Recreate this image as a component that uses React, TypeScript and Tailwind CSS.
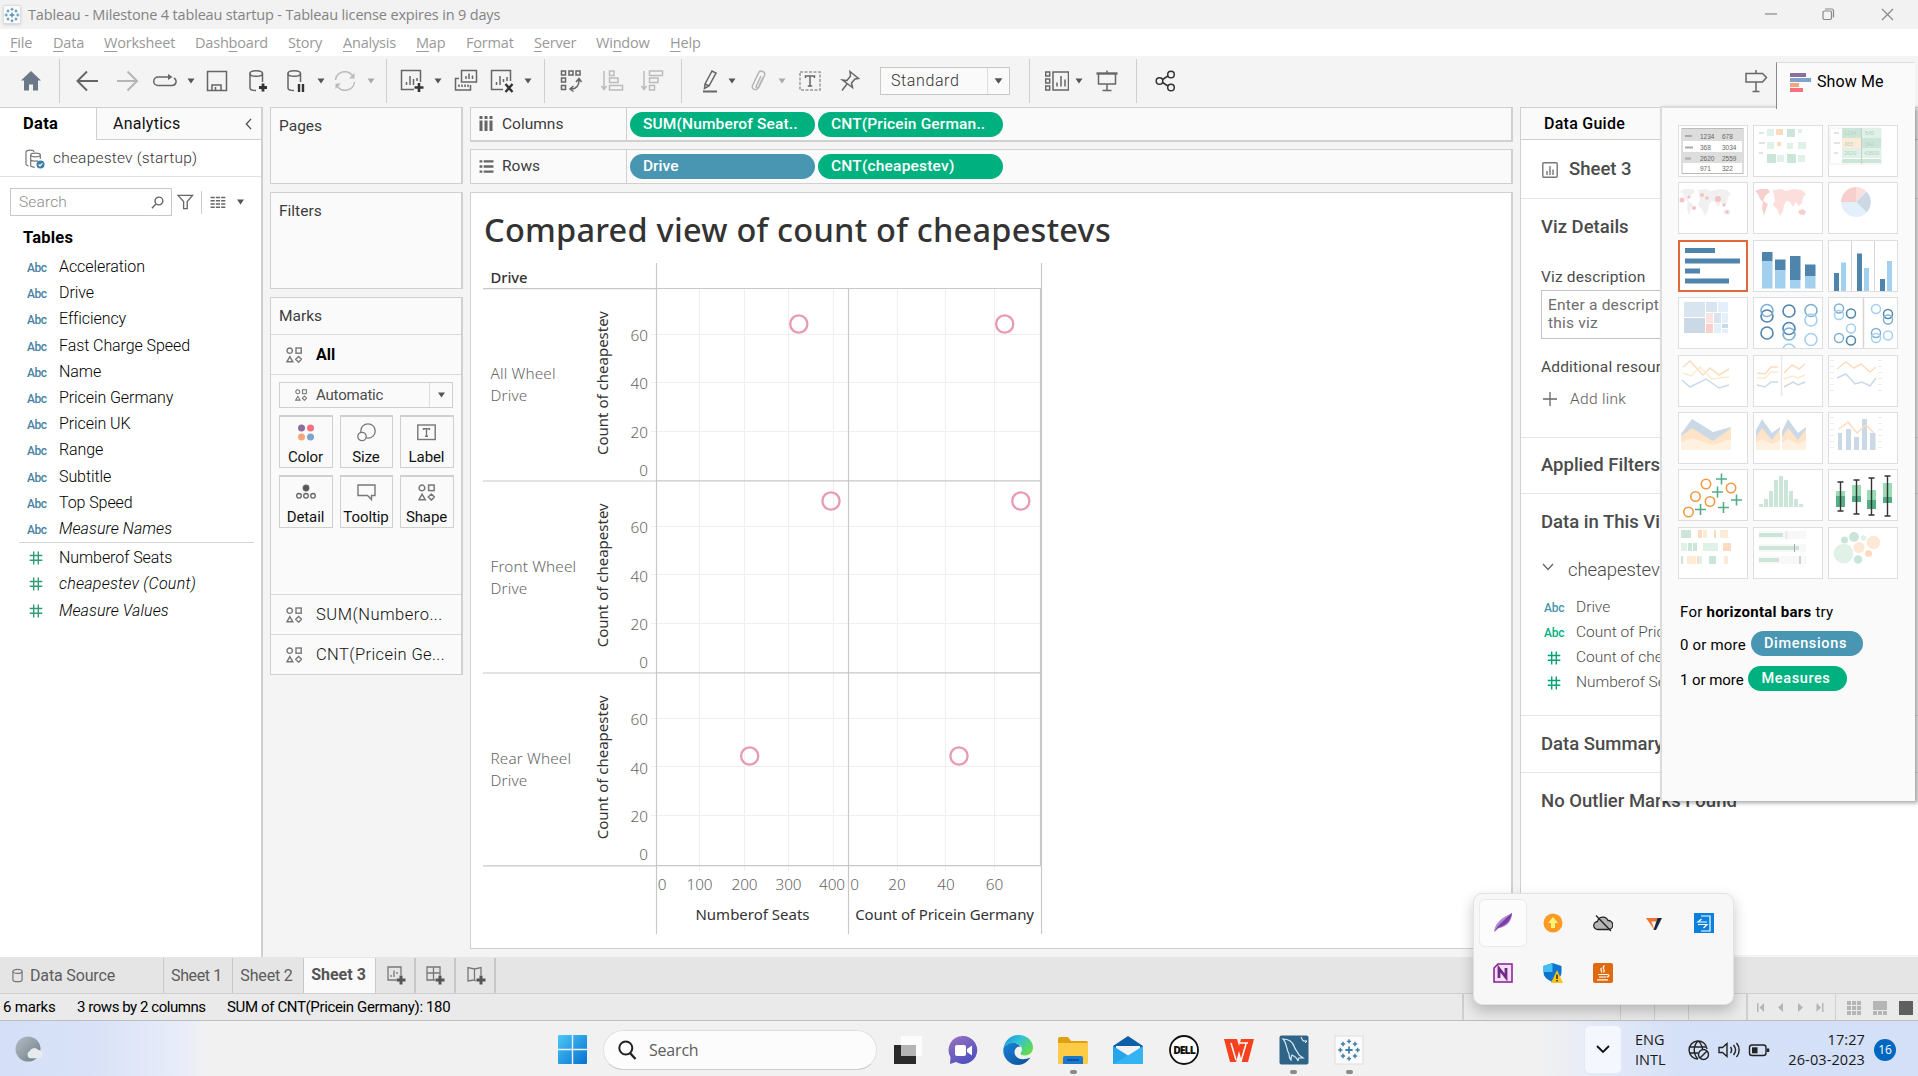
import React from "react";

type P = { children?: React.ReactNode; className?: string };

/* ---------- shared bits ---------- */

function Ic({ children, className = "" }: P) {
  return (
    <svg viewBox="0 0 24 24" className={`h-6 w-6 shrink-0 ${className}`} fill="none" stroke="#666" strokeWidth="1.5">
      {children}
    </svg>
  );
}

function Tri({ className = "" }: P) {
  return (
    <svg viewBox="0 0 8 6" className={`h-1.5 w-2 shrink-0 text-[#555] ${className}`} fill="currentColor">
      <path d="M0.5 0.5h7L4 5.5z" />
    </svg>
  );
}

const Sep = ({ className = "" }: P) => <div className={`h-[44px] w-px shrink-0 bg-[#cfcfcf] ${className}`} />;

const Shapes = ({ className = "" }: P) => (
  <svg viewBox="0 0 16 16" className={`shrink-0 ${className}`} fill="none" stroke="#777" strokeWidth="1.4">
    <circle cx="3.7" cy="3.7" r="2.7" />
    <rect x="10" y="1" width="5.2" height="5.2" />
    <path d="M3.8 9.6l3 5.2H0.9zM12.6 9.4l2.9 2.9-2.9 2.9-2.9-2.9z" />
  </svg>
);

const Hash = ({ className = "" }: P) => (
  <svg viewBox="0 0 14 14" className={`h-3.5 w-3.5 shrink-0 ${className}`} fill="none" stroke="currentColor" strokeWidth="1.4">
    <path d="M4.7 0.5v13M9.3 0.5v13M0.7 4.5h12.6M0.7 9.2h12.6" />
  </svg>
);

/* ---------- title and menu ---------- */

function TableauMark({ className = "" }: P) {
  return (
    <svg viewBox="0 0 20 20" className={className} stroke="#4b8fb5" fill="none" strokeWidth="1.3">
      <path d="M10 7v6M7 10h6" strokeWidth="1.6" />
      <path d="M10 1v3.6M8.2 2.8h3.6M10 15.4V19M8.2 17.2h3.6M2.8 8.2v3.6M1 10h3.6M17.2 8.2v3.6M15.4 10H19" />
      <path d="M5 3.2v3.6M3.2 5h3.6M15 3.2v3.6M13.2 5h3.6M5 13.2v3.6M3.2 15h3.6M15 13.2v3.6M13.2 15h3.6" />
    </svg>
  );
}

function TitleBar() {
  return (
    <div className="flex h-[29px] shrink-0 items-center bg-[#f2f2f2] pl-[3px] font-['Open_Sans',sans-serif] text-[14.5px] tracking-[-0.16px] text-[#838383]">
      <div className="flex h-[19px] w-[18px] items-center justify-center border border-[#ddd] bg-[#fafafa] shadow">
        <TableauMark className="h-[16px] w-[16px]" />
      </div>
      <span className="ml-[7px] whitespace-nowrap">Tableau - Milestone 4 tableau startup - Tableau license expires in 9 days</span>
      <svg viewBox="0 0 140 16" className="mr-[21px] ml-auto h-4 w-[140px]" fill="none" stroke="#888" strokeWidth="1.2">
        <path d="M8 7h12" />
        <rect x="66" y="4" width="8.5" height="8.5" rx="1.5" />
        <path d="M68 2h6.500a2 2 0 0 1 2 2V10.500" />
        <path d="M125 2l11 11M136 2l-11 11" />
      </svg>
    </div>
  );
}

const menus: [string, string, string, string][] = [
  ["", "F", "ile", "w-[43px]"],
  ["", "D", "ata", "w-[51px]"],
  ["", "W", "orksheet", "w-[91px]"],
  ["Dash", "b", "oard", "w-[93px]"],
  ["S", "t", "ory", "w-[55px]"],
  ["", "A", "nalysis", "w-[73px]"],
  ["", "M", "ap", "w-[50px]"],
  ["F", "o", "rmat", "w-[68px]"],
  ["", "S", "erver", "w-[62px]"],
  ["Wi", "n", "dow", "w-[74px]"],
  ["", "H", "elp", "w-[40px]"],
];

function MenuBar() {
  return (
    <div className="flex h-[27px] shrink-0 items-center bg-white pl-[10px] font-['Open_Sans',sans-serif] text-[14.5px] tracking-[-0.2px] text-[#999]">
      {menus.map(([a, b, c, w]) => (
        <span key={a + b + c} className={`${w} whitespace-nowrap`}>
          {a}
          <span className="underline underline-offset-[3px]">{b}</span>
          {c}
        </span>
      ))}
    </div>
  );
}

/* ---------- toolbar ---------- */

function Toolbar() {
  return (
    <div className="flex h-[51px] shrink-0 items-center bg-[#f4f4f4] pb-px pl-[19px]">
      <Ic>
        <path d="M12 2L2 11.500h3V21.500h5v-6h4v6h5v-10h3z" fill="#6b7888" stroke="none" />
      </Ic>
      <Sep className="ml-4" />
      <Ic className="ml-[15px]">
        <path d="M23 12H3M12 2.500L2.500 12l9.500 9.500" strokeWidth="2" />
      </Ic>
      <Ic className="ml-4">
        <path d="M2 12h20M12.500 2.500l9.500 9.500-9.500 9.500" strokeWidth="2" stroke="#b5b5b5" />
      </Ic>
      <Ic className="ml-[14px]">
        <path d="M16 8H5a4 4 0 0 0 0 8.500h14a4 4 0 0 0 2-7.500" />
        <path d="M15 5l4.500 3-4.500 3z" fill="#666" stroke="none" />
      </Ic>
      <Tri className="ml-[10px]" />
      <Ic className="ml-[10px]">
        <path d="M2.500 2.500h19v19h-19zM7 21v-5h9v5M10.500 21v-3" />
      </Ic>
      <Ic className="ml-4">
        <path d="M5 4.500v14.500c0 1.500 2.500 2.500 6 2.500M17.500 4.500V13" />
        <ellipse cx="11.200" cy="4.500" rx="6.300" ry="2.800" />
        <path d="M18 14.500v8M14 18.500h8" stroke="#333" strokeWidth="2.800" />
      </Ic>
      <Ic className="ml-[14px]">
        <path d="M5 4.500v14.500c0 1.500 2.500 2.500 6 2.500M17.500 4.500V13" />
        <ellipse cx="11.200" cy="4.500" rx="6.300" ry="2.800" />
        <path d="M16 15v8M20 15v8" stroke="#333" strokeWidth="2.400" />
      </Ic>
      <Tri className="ml-[10px]" />
      <Ic className="ml-2">
        <path d="M2.500 11a9.500 9.500 0 0 1 17-4.500M21.500 13a9.500 9.500 0 0 1-17 4.500" stroke="#bbb" />
        <path d="M21.500 4v5.500h-5.500zM2.500 20v-5.500h5.500z" fill="#bbb" stroke="none" />
      </Ic>
      <Tri className="ml-[10px] !text-[#aaa]" />
      <Sep className="ml-[11px]" />
      <Ic className="ml-[13px]">
        <path d="M14 20.500H1.500V1.500h19V13M6.500 16v-3M10 16V7M13.500 16v-6M17 12V9" />
        <path d="M19 14v9M14.500 18.500h9" stroke="#333" strokeWidth="2.600" />
      </Ic>
      <Tri className="ml-[10px]" />
      <Ic className="ml-[12px]">
        <path d="M7.500 1.500h15v11.500h-15zM12 10V7M15 10V4.500M18.500 10V6.500M5 9.500H1.500V21h15v-5M5 18v-2.500M8 18v-2.500M11 18v-2.500M14 18v-2.500" />
      </Ic>
      <Ic className="ml-[12px]">
        <path d="M13 20.500H1.500V1.500h19V12M6.500 16v-3M10 16V7M13.500 13v-3M17 12V8" />
        <path d="M15.500 15l7 8M22.500 15l-7 8" stroke="#333" strokeWidth="2.400" />
      </Ic>
      <Tri className="ml-[10px]" />
      <Sep className="ml-[12px]" />
      <Ic className="ml-[14px]">
        <path d="M2.500 2h4v4h-4zM10 2h4v4h-4zM17 2h4v4h-4zM2.500 9h4v4h-4zM2.500 16.500h4v4h-4zM12 20c6 0 8-4 8-9M17 13l3-3.500 2.500 3.500M14.500 17L11 20l3.500 2.500" />
      </Ic>
      <Ic className="ml-[17px]">
        <path d="M4 2v18M1.500 17L4 20.500 6.500 17M9.500 2h4.500v4.500H9.500zM9.500 9h8.500v4.500H9.500zM9.500 16.500h13V21h-13z" stroke="#bbb" />
      </Ic>
      <Ic className="ml-4">
        <path d="M4 2v18M1.500 17L4 20.500 6.500 17M9.500 2h13v4.500h-13zM9.500 9h8.500v4.500H9.500zM9.500 16.500h5V21h-5z" stroke="#bbb" />
      </Ic>
      <Sep className="ml-[17px]" />
      <Ic className="ml-[17px]">
        <path d="M6 15l7-13 4 2-7 13-4.500 2.500zM6 15l4 2" />
        <path d="M4 22.500h14" strokeWidth="2" />
      </Ic>
      <Tri className="ml-[5px]" />
      <Ic className="ml-[11px]">
        <path d="M16 8.500L11 19c-1.500 3-7 1.500-5.500-2.500L11.500 4c1.500-3.500 7.500-1.500 6 2.500L12 18c-1 2-3.500 1-2.700-1L14 7" stroke="#b5b5b5" />
      </Ic>
      <Tri className="ml-[7px] !text-[#aaa]" />
      <Ic className="ml-[12px]">
        <rect x="2" y="3" width="20" height="18" strokeDasharray="3 1.500" stroke="#999" />
        <path d="M7.500 9V7h9v2M12 7v10M9.800 17h4.400" />
      </Ic>
      <Ic className="ml-4">
        <path d="M12 2.500l8.500 7-3.500.5-3.500 4 1 4.500L4.500 11l4.500.5 3.500-4.500zM9 15l-5 6.500" />
      </Ic>
      <div className="ml-[18px] flex h-7 w-[130px] items-center border border-[#c8c8c8] bg-[#fafafa]">
        <span className="w-[106px] pl-[10px] font-[Roboto,sans-serif] text-[16px] font-[350] tracking-[0.600px] text-[#333]">Standard</span>
        <div className="flex h-full flex-1 items-center justify-center border-l border-[#ddd]">
          <Tri className="!h-2 !w-[9px]" />
        </div>
      </div>
      <Sep className="ml-[19px]" />
      <Ic className="ml-[15px]">
        <path d="M0.700 3h4v4h-4zM0.700 10h4v4h-4zM0.700 17h4v4h-4zM8 3h15.500v18H8zM12 17.500v-4M16 17.500V7M20 17.500v-7" />
      </Ic>
      <Tri className="ml-[6px]" />
      <Ic className="ml-[12px]">
        <path d="M1.500 4.500h21" strokeWidth="2.400" />
        <path d="M12 1.500v3M3.500 4.500V15h17V4.500M12 15v6M7.500 21.500h9" />
      </Ic>
      <Sep className="ml-[17px]" />
      <Ic className="ml-[17px]">
        <g stroke="#333">
          <circle cx="5.500" cy="12" r="3.300" />
          <circle cx="17" cy="5.500" r="3.300" />
          <circle cx="17" cy="18.500" r="3.300" />
          <path d="M8.500 10.500l5.500-3.500M8.500 13.500l5.500 3.500" />
        </g>
      </Ic>
      <Ic className="mr-[150px] ml-auto">
        <path d="M12 1v4M2 4.500h16.500l4 4-4 4.500H2zM12 13v9.500M8.500 22.500h7" />
      </Ic>
    </div>
  );
}

/* ---------- data pane ---------- */

const dims = ["Acceleration", "Drive", "Efficiency", "Fast Charge Speed", "Name", "Pricein Germany", "Pricein UK", "Range", "Subtitle", "Top Speed", "Measure Names"];
const measures = ["Numberof Seats", "cheapestev (Count)", "Measure Values"];

function DataPane() {
  return (
    <div className="flex w-[263px] shrink-0 flex-col border-r-2 border-[#d0d0d0] bg-white">
      <div className="flex h-[33px] border-t border-[#d0d0d0] text-[16px] text-black">
        <div className="w-[97px] border-r border-[#d0d0d0] pl-[23px] text-[16.500px] leading-[32px] font-bold tracking-[0.300px]">Data</div>
        <div className="flex flex-1 items-center justify-between border-b border-[#d0d0d0] bg-[#fafafa] pr-[9px] pl-[16px] font-[380] tracking-[0.250px] text-[#111]">
          Analytics
          <svg viewBox="0 0 8 14" className="h-3 w-[7px]" fill="none" stroke="#555" strokeWidth="1.6">
            <path d="M7 1L1.500 7 7 13" />
          </svg>
        </div>
      </div>
      <div className="flex h-[37px] items-center border-b border-[#e0e0e0] pt-px pl-[25px] text-[15.500px] font-[350] tracking-[0.200px] text-[#333]">
        <svg viewBox="0 0 20 20" className="h-5 w-5" fill="none" stroke="#777" strokeWidth="1.200">
          <path d="M1 3v12c0 1 1 1.500 2.500 1.800M1 3c0-2.500 8-2.500 8 0" />
          <ellipse cx="10.500" cy="6" rx="4.800" ry="1.800" />
          <path d="M5.700 6v11c1 1 2 1.300 4 1.300M15.300 6v4M5.700 11c2 1.500 6 1.500 7 .5" />
          <circle cx="15.500" cy="15.500" r="4" fill="#3b82a6" stroke="none" />
          <path d="M13.600 15.500l1.400 1.400 2.400-2.600" stroke="#fff" />
        </svg>
        <span className="ml-[8px]">cheapestev (startup)</span>
      </div>
      <div className="mt-[11px] flex h-7 items-center pl-[10px]">
        <div className="flex h-7 w-[162px] items-center justify-between border border-[#c8c8c8] pt-px pr-[7px] pl-[8px] text-[15.500px] font-[350] tracking-[0.150px] text-[#8c8c8c]">
          Search
          <svg viewBox="0 0 12 12" className="h-[13px] w-[13px]" fill="none" stroke="#666" strokeWidth="1.300">
            <circle cx="7.300" cy="4.600" r="3.600" />
            <path d="M4.600 7.400L0.800 11.200" />
          </svg>
        </div>
        <svg viewBox="0 0 18 18" className="ml-[5px] h-[18px] w-[17px]" fill="none" stroke="#666" strokeWidth="1.400">
          <path d="M1 2h15.500l-5.700 6.500V16H7V8.500z" />
        </svg>
        <div className="ml-[7px] h-[23px] w-px bg-[#ccc]" />
        <svg viewBox="0 0 16 14" className="ml-[8px] h-[13px] w-4" stroke="#666" strokeWidth="1.600" strokeDasharray="4.500 1.200">
          <path d="M0 1.500h16M0 5h16M0 8.500h16M0 12h16" />
        </svg>
        <Tri className="ml-[10px] !h-[6px] !w-[9px]" />
      </div>
      <div className="mt-[9px] h-[26px] pl-[23px] text-[16.500px] leading-[26px] font-bold tracking-[0.200px] text-black">Tables</div>
      <div className="mt-[3px] text-[16px] font-[350] text-black">
        {dims.map((d) => (
          <div key={d} className="flex h-[26.200px] items-center pl-[27px]">
            <span className="w-[32px] pt-[2px] text-[12px] font-medium tracking-[-0.5px] text-[#4683a5]">Abc</span>
            <span className={d === "Measure Names" ? "tracking-[0.080px] italic" : "tracking-[-0.080px]"}>{d}</span>
          </div>
        ))}
      </div>
      <div className="mr-[7px] ml-[19px] h-px bg-[#d4d4d4]" />
      <div className="mt-[2px] text-[16px] font-[350] text-black">
        {measures.map((m, i) => (
          <div key={m} className="flex h-[26.200px] items-center pl-[29px]">
            <Hash className="mr-4 text-[#2f9e74]" />
            <span className={i === 0 ? "tracking-[-0.080px]" : i === 1 ? "tracking-[0.250px] italic" : "tracking-[0.080px] italic"}>{m}</span>
          </div>
        ))}
      </div>
    </div>
  );
}

/* ---------- marks column ---------- */

const box = "border border-r-2 border-[#d0d0d0] bg-[#fafafa]";

function MarkButton({ label, children }: { label: string; children: React.ReactNode }) {
  return (
    <div className="flex h-[53px] flex-col items-center border border-t-2 border-[#d0d0d0] pt-[6px] pr-px text-[15px] font-[380] tracking-[-0.1px] text-[#111]">
      {children}
      <span className="mt-[5px] leading-5">{label}</span>
    </div>
  );
}

function MarksColumn() {
  return (
    <div className="ml-[7px] flex w-[193px] shrink-0 flex-col text-[15.500px] font-[380] text-[#3c3c3c]">
      <div className={`${box} h-[77px] pt-[8px] pl-[8px] leading-5`}>Pages</div>
      <div className={`${box} mt-[8px] h-[97px] pt-[8px] pl-[8px] leading-5`}>Filters</div>
      <div className={`${box} mt-[8px] flex h-[378px] flex-col`}>
        <div className="h-[37px] shrink-0 border-b border-[#d9d9d9] pt-[8px] pl-[8px] leading-5">Marks</div>
        <div className="flex h-10 shrink-0 items-center border-b border-[#d9d9d9] pl-[15px] text-[16px] font-bold text-black">
          <Shapes className="mr-[14px] h-4 w-4" />
          All
        </div>
        <div className="mx-[8px] mt-[7px] flex h-[26px] shrink-0 items-center border border-[#cfcfcf] pl-[15px] text-[15px] tracking-[-0.200px] text-[#4c4c4c]">
          <Shapes className="mr-[9px] h-3 w-3" />
          Automatic
          <div className="ml-auto flex h-full w-[23px] items-center justify-center border-l border-[#ddd]">
            <Tri className="!h-[6px] !w-[9px]" />
          </div>
        </div>
        <div className="mx-[8px] mt-[7px] grid grid-cols-[54px_53px_54px] gap-x-[7px] gap-y-[7px]">
          <MarkButton label="Color">
            <svg viewBox="0 0 18 18" className="h-[19px] w-[18px]">
              <circle cx="4.500" cy="4.500" r="3.500" fill="#8a6f9d" />
              <circle cx="13.500" cy="4.500" r="3.500" fill="#f8707f" />
              <circle cx="4.500" cy="13.500" r="3.500" fill="#f2a679" />
              <circle cx="13.500" cy="13.500" r="3.500" fill="#7fa3cc" />
            </svg>
          </MarkButton>
          <MarkButton label="Size">
            <svg viewBox="0 0 19 19" className="h-[19px] w-[19px]" fill="none" stroke="#777" strokeWidth="1.300">
              <circle cx="11" cy="8" r="7.200" />
              <circle cx="5" cy="13.500" r="4.200" fill="#fafafa" />
            </svg>
          </MarkButton>
          <MarkButton label="Label">
            <svg viewBox="0 0 19 19" className="h-[19px] w-[19px]" fill="none" stroke="#777" strokeWidth="1.400">
              <rect x="0.800" y="2" width="17.400" height="14.500" />
              <path d="M6.500 7V5.700h6V7M9.500 5.700v7.500M8 13.200h3" />
            </svg>
          </MarkButton>
          <MarkButton label="Detail">
            <svg viewBox="0 0 20 19" className="h-[19px] w-5" fill="none" stroke="#666" strokeWidth="1.300">
              <circle cx="10" cy="5" r="2.800" fill="#555" />
              <circle cx="3" cy="12.800" r="2.300" />
              <circle cx="10" cy="12.800" r="2.300" />
              <circle cx="17" cy="12.800" r="2.300" />
            </svg>
          </MarkButton>
          <MarkButton label="Tooltip">
            <svg viewBox="0 0 19 19" className="h-[19px] w-[19px]" fill="none" stroke="#777" strokeWidth="1.400">
              <path d="M1 2h17v10.500h-3.500v4l-4-4H1z" />
            </svg>
          </MarkButton>
          <MarkButton label="Shape">
            <div className="flex h-[19px] items-center">
              <Shapes className="h-[17px] w-[17px]" />
            </div>
          </MarkButton>
        </div>
        <div className="mt-auto flex h-10 shrink-0 items-center border-t border-[#d9d9d9] pt-px pl-[15px] text-[16.500px] font-[350] tracking-[0.500px] text-[#111]">
          <Shapes className="mr-[14px] h-4 w-4" />
          SUM(Numbero...
        </div>
        <div className="flex h-10 shrink-0 items-center border-t border-[#d9d9d9] pt-px pl-[15px] text-[16.500px] font-[350] tracking-[0.400px] text-[#111]">
          <Shapes className="mr-[14px] h-4 w-4" />
          CNT(Pricein Ge...
        </div>
      </div>
    </div>
  );
}

/* ---------- shelves and view ---------- */

const Pill = ({ children, className = "" }: P) => (
  <div className={`mr-[3px] h-[25px] w-[185px] rounded-full pl-[13px] text-[15.500px] leading-[25px] font-medium whitespace-nowrap text-white ${className}`}>{children}</div>
);

const vGrid = [699.5, 744.5, 788.5, 833.5, 897.5, 945.5, 994.5];
const bands = [
  { top: 288.5, name: "All Wheel", ty: 373.5, c1: 798.8, c2: 1004.7, cy: 324 },
  { top: 480.8, name: "Front Wheel", ty: 566.5, c1: 831, c2: 1020.8, cy: 501 },
  { top: 672.8, name: "Rear Wheel", ty: 758.5, c1: 749.7, c2: 959, cy: 756 },
];
const xTicks: [string, number][] = [["0", 662], ["100", 699.5], ["200", 744.5], ["300", 788.5], ["400", 832], ["0", 854.6], ["20", 897], ["40", 946], ["60", 994.5]];

function Chart() {
  return (
    <svg viewBox="471 253 600 690" className="h-[690px] w-[600px] font-['Noto_Sans',sans-serif] text-[15px]" fill="none">
      <g stroke="#efefef" strokeWidth="1.200">
        {vGrid.map((x) => (
          <path key={x} d={`M${x} 288V871`} />
        ))}
        {bands.map((b) =>
          [46, 94.500, 143.500].map((d) => <path key={b.top + d} d={`M651 ${Math.round(b.top + d) - 0.5}H1041`} />)
        )}
      </g>
      <g stroke="#c8c8c8" strokeWidth="1.200">
        <path d="M656.500 263V934M848.500 288V934M1041.500 263V934" />
        <path d="M1040.500 288V866" />
        {[288.5, 480.8, 672.8, 865.7].map((y) => (
          <path key={y} d={`M483 ${y + 0.200}H656M656 ${y}H1041`} />
        ))}
      </g>
      <text x="490.500" y="283" fill="#333" fontSize="14.800" fontWeight="500" letterSpacing="-0.100">Drive</text>
      {bands.map((b) => (
        <g key={b.name}>
          <g fill="#666" fontSize="15.300" fontWeight="330" letterSpacing="0.150">
            <text x="490.500" y={b.ty + 5.500}>{b.name}</text>
            <text x="490.500" y={b.ty + 27}>Drive</text>
          </g>
          <text transform={`translate(607.500 ${b.top + 94.500}) rotate(-90)`} textAnchor="middle" fill="#333" fontSize="15">Count of cheapestev</text>
          <g fill="#666" textAnchor="end" fontSize="15.300" fontWeight="330">
            <text x="648" y={b.top + 52.200}>60</text>
            <text x="648" y={b.top + 100.700}>40</text>
            <text x="648" y={b.top + 149.500}>20</text>
            <text x="648" y={b.top + 187.600}>0</text>
          </g>
          <g stroke="#e89ab5" strokeWidth="2.300">
            <circle cx={b.c1} cy={b.cy} r="8.600" />
            <circle cx={b.c2} cy={b.cy} r="8.600" />
          </g>
        </g>
      ))}
      <g fill="#666" textAnchor="middle" fontSize="15.300" fontWeight="330">
        {xTicks.map(([t, x]) => (
          <text key={x} x={x} y="890">{t}</text>
        ))}
      </g>
      <g fill="#333" textAnchor="middle" fontWeight="430">
        <text x="752.500" y="920">Numberof Seats</text>
        <text x="944.500" y="920" letterSpacing="-0.110">Count of Pricein Germany</text>
      </g>
    </svg>
  );
}

function View() {
  return (
    <div className="ml-[7px] flex w-[1043px] shrink-0 flex-col">
      <div className="flex h-[35px] items-center border border-r-2 border-b-2 border-[#d0d0d0] bg-[#fafafa] text-[15.500px] font-[380] text-[#3c3c3c]">
        <div className="flex h-full w-[156px] items-center border-r border-[#d0d0d0] pt-px pl-[8px]">
          <svg viewBox="0 0 14 15" className="mr-[9px] mb-[2px] h-[15px] w-[14px]" stroke="#666" strokeWidth="3">
            <path d="M2 0v3M7 0v3M12 0v3M2 4.500V15M7 4.500V15M12 4.500V15" />
          </svg>
          Columns
        </div>
        <Pill className="ml-[3px] bg-[#00b180] tracking-[0.150px]">SUM(Numberof Seat..</Pill>
        <Pill className="bg-[#00b180] tracking-[0.150px]">CNT(Pricein German..</Pill>
      </div>
      <div className="mt-[7px] flex h-[35px] items-center border border-r-2 border-[#d0d0d0] bg-[#fafafa] text-[15.500px] font-[380] text-[#3c3c3c]">
        <div className="flex h-full w-[156px] items-center border-r border-[#d0d0d0] pt-px pl-[8px]">
          <svg viewBox="0 0 15 14" className="mr-[8px] mb-[2px] h-[13px] w-[15px]" stroke="#666" strokeWidth="2.600">
            <path d="M0 1.500h3M0 7h3M0 12.500h3M4.500 1.500H15M4.500 7H15M4.500 12.500H15" />
          </svg>
          Rows
        </div>
        <Pill className="ml-[3px] bg-[#4996b2]">Drive</Pill>
        <Pill className="bg-[#00b180] tracking-[0.200px]">CNT(cheapestev)</Pill>
      </div>
      <div className="mt-[8px] flex h-[757px] flex-col border border-r-2 border-[#d0d0d0] bg-white">
        <h1 className="h-[60px] pt-[13px] pl-[13px] font-['Noto_Sans',sans-serif] text-[32.500px] leading-[48px] font-medium tracking-[0.250px] whitespace-nowrap text-[#333]">Compared view of count of cheapestevs</h1>
        <Chart />
      </div>
    </div>
  );
}

/* ---------- data guide ---------- */

const guideFields = ["Drive", "Count of Pricein Germany", "Count of cheapestev", "Numberof Seats"];

function DataGuide() {
  return (
    <div className="ml-[7px] flex h-[848px] flex-1 flex-col overflow-hidden border-t border-l border-[#d0d0d0] bg-white whitespace-nowrap text-[#4b4b4b]">
      <div className="h-8 shrink-0 border-b border-[#d0d0d0] bg-[#fafafa] pl-[23px] text-[16px] leading-[31px] font-medium tracking-[0.250px] text-black">Data Guide</div>
      <div className="flex h-[59px] shrink-0 items-center border-b border-[#e6e6e6] pt-px pl-[21px] text-[18.500px] font-medium">
        <svg viewBox="0 0 16 16" className="mr-[11px] h-4 w-4" fill="none" stroke="#777" strokeWidth="1.400">
          <rect x="0.800" y="0.800" width="14.400" height="14.400" rx="1" />
          <path d="M5 13V9M8 13V4M11 13V7.500" />
        </svg>
        Sheet 3
      </div>
      <div className="flex h-[239px] shrink-0 flex-col border-b border-[#e6e6e6] pl-[20px]">
        <div className="mt-[16px] text-[18.500px] leading-6 font-medium">Viz Details</div>
        <div className="mt-[28px] text-[15.500px] leading-5 tracking-[0.150px]">Viz description</div>
        <div className="mt-[3px] h-[49px] w-[340px] border border-[#c4c4c4] pt-[5px] pl-[6px] text-[15.500px] leading-[18px] tracking-[0.2px] text-[#6d6d6d]">
          Enter a description for
          <br />
          this viz
        </div>
        <div className="mt-[18px] text-[15.500px] leading-5 tracking-[0.150px]">Additional resources</div>
        <div className="mt-[12px] flex items-center text-[15.500px] leading-5 font-[350] tracking-[0.300px] text-[#5a5a5a]">
          <svg viewBox="0 0 16 16" className="mr-[12px] ml-px h-4 w-4" stroke="#666" strokeWidth="1.300">
            <path d="M8 1v14M1 8h14" />
          </svg>
          Add link
        </div>
      </div>
      <div className="flex h-[55.500px] shrink-0 items-center border-b border-[#e6e6e6] pt-[2px] pl-[20px] text-[18.500px] font-medium">Applied Filters</div>
      <div className="flex h-[222px] shrink-0 flex-col border-b border-[#e6e6e6] pl-[20px]">
        <div className="mt-[16px] text-[18.500px] leading-6 font-medium">Data in This Viz</div>
        <div className="mt-[24px] flex items-center text-[18.500px] leading-6 font-light tracking-[-0.100px]">
          <svg viewBox="0 0 12 8" className="mr-[14px] mb-[5px] ml-[1px] h-2 w-3" fill="none" stroke="#666" strokeWidth="1.300">
            <path d="M1 1l5 5.500L11 1" />
          </svg>
          cheapestev
        </div>
        <div className="mt-[14px] text-[15.500px] font-[350] text-[#4b4b4b]">
          {guideFields.map((f, i) => (
            <div key={f} className="flex h-[25px] items-center">
              {i < 2 ? (
                <span className={`ml-[3px] w-[32px] shrink-0 text-[12px] font-medium tracking-[-0.2px] ${i === 0 ? "text-[#4996b2]" : "text-[#00b180]"}`}>Abc</span>
              ) : (
                <Hash className="mr-[15px] ml-[6px] text-[#00a376]" />
              )}
              {f}
            </div>
          ))}
        </div>
      </div>
      <div className="flex h-[57px] shrink-0 items-center border-b border-[#e6e6e6] pt-[2px] pl-[20px] text-[18.500px] font-medium">Data Summary</div>
      <div className="flex h-[57px] shrink-0 items-center pt-px pl-[20px] text-[18.500px] font-medium">No Outlier Marks Found</div>
    </div>
  );
}

/* ---------- show me ---------- */

const NA = "M2 9l5-2 8 0 2 3-4 3-2 3-1 4-3-3-2-5zM10 19l5 3-3 8-1 4-2-8z";
const EU = "M20 8l8-1 5 2 8-2 8 1 4 4-3 3-1 6-3 3-3-4-3 5-3-5-4-1-2 4-1 6-3 5-3-7-4-4 2-5zM45 29l5-2 3 3-2 3-5-1z";

const thumbs: React.ReactNode[] = [
  <g key="0">
    <rect x="4" y="3.500" width="61" height="45" fill="#fff" stroke="#bbb" />
    <path d="M4 4h61v12H4zM4 27h61v11H4z" fill="#ddd" />
    <path d="M7 11h7M7 22.500h8M7 33.500h6" stroke="#aaa" strokeWidth="2" />
    <g fill="#666" stroke="none" fontSize="6.500">
      <text x="22" y="13.500">1234</text><text x="44" y="13.500">678</text>
      <text x="22" y="24.500">368</text><text x="44" y="24.500">3034</text>
      <text x="22" y="35.500">2620</text><text x="44" y="35.500">2559</text>
      <text x="22" y="46">971</text><text x="44" y="46">322</text>
    </g>
  </g>,
  <g key="1">
    <path d="M6 8h5M6 18h6M6 28h4" stroke="#e3e3e3" strokeWidth="2" />
    <path d="M14 4h7v7h-7zM45 4h4v4h-4zM14 17h7v7h-7zM34 18h6v6h-6zM45 17h8v7h-8zM24 30h7v7h-7zM45 30h7v7h-7z" fill="#e0f2e8" />
    <path d="M34 4h8v8h-8zM14 29h9v9h-9zM34 29h9v9h-9z" fill="#cbe6d9" />
    <path d="M23 4h7v6h-7zM24 17h4v4h-4z" fill="#fbdcc0" />
  </g>,
  <g key="2">
    <path d="M2 3h51v36H2z" fill="#fff" stroke="#eee" />
    <path d="M6 8h5M6 18h6M6 28h4" stroke="#e3e3e3" strokeWidth="2" />
    <path d="M14 3h19v10H14zM34 13h19v10H34zM14 34h39v4H14z" fill="#cbe6d9" />
    <path d="M34 3h19v10H34zM14 23h39v10H14z" fill="#e0f2e8" />
    <path d="M14 13h19v10H14z" fill="#fdebd8" />
    <path d="M33.500 3v36" stroke="#ccc" />
    <g fill="#b9cfc4" fontSize="5.500"><text x="16" y="10">1234</text><text x="37" y="10">545</text><text x="16" y="20.500">365</text><text x="37" y="20.500">342</text><text x="16" y="30">2620</text><text x="36" y="30">43800</text></g>
  </g>,
  <g key="3">
    <path d={NA + EU} fill="#f0f0f0" />
    <g fill="#f3c3c3"><circle cx="4" cy="18" r="2.500" /><circle cx="24" cy="13" r="2" /><circle cx="29" cy="16" r="1.800" /><circle cx="40" cy="17" r="3" /><circle cx="46" cy="23" r="1.800" /><circle cx="49" cy="30" r="1.800" /><circle cx="16" cy="26" r="2" /><circle cx="11" cy="15" r="1.600" /></g>
  </g>,
  <g key="4">
    <path d={NA} fill="#f7cfcd" />
    <path d={EU} fill="#fcdedd" />
    <path d="M46 29l4-2 3 3-2 3-5-1z" fill="#f7cfcd" />
  </g>,
  <g key="5">
    <path d="M28 20V5a15 15 0 0 1 10.500 4.500z" fill="#fcdedd" />
    <path d="M28 20L38.500 9.500a15 15 0 0 1 0 21z" fill="#cbd9e6" />
    <path d="M28 20l10.500 10.500A15 15 0 0 1 13 20z" fill="#e3f0fb" />
    <path d="M28 20H13A15 15 0 0 1 28 5z" fill="#f7cfcd" />
  </g>,
  <path key="6" d="M7 8h30v5H7zM7 18.500h55v5H7zM7 28.500h15v5H7zM7 38.500h44v5H7z" fill="#4f84ad" />,
  <g key="7">
    <path d="M9 21h10.500v27.500H9zM22 30h10.500v18.500H22zM37 40h10.500v8.500H37zM52 36h10.500v12.500H52z" fill="#a4d0ef" />
    <path d="M9 12h10.500v9H9zM22 19.500h10.500V30H22zM37 16h10.500v24H37zM52 24.500h10.500V36H52z" fill="#4f84ad" />
  </g>,
  <g key="8">
    <path d="M23.500 0v52M46.500 0v52" stroke="#d5d5d5" />
    <path d="M13 22.500h5V52h-5zM36 28h5v24h-5zM59 21h5v31h-5z" fill="#a4d0ef" />
    <path d="M6 33h5v19H6zM29 13.500h5V52h-5zM52 39h5v13h-5z" fill="#4f84ad" />
  </g>,
  <g key="9">
    <path d="M6 5h21v15H6zM36 16h7v10h-7z" fill="#d8e5f0" />
    <path d="M6 21h21v15H6zM44 27h6v4h-6z" fill="#cbd9e6" />
    <path d="M28 5h11v10H28z" fill="#d8e5f0" />
    <path d="M40 5h10v10H40zM44 16h6v10h-6zM36 27h7v9h-7zM44 32h6v4h-6z" fill="#e3f0fb" />
    <path d="M28 16h7v10h-7z" fill="#fce3e0" />
    <path d="M28 27h7v9h-7z" fill="#f9cfcc" />
  </g>,
  <g key="10" strokeWidth="1.600" fill="none">
    <g stroke="#4f84ad"><circle cx="14" cy="19" r="6" /><circle cx="14" cy="36" r="6" /><circle cx="36" cy="14" r="6" /><circle cx="36" cy="31.500" r="6" /></g>
    <g stroke="#7fb0d4"><circle cx="14" cy="13.500" r="6" /><circle cx="36" cy="37" r="6" /><circle cx="58" cy="13.500" r="6" /></g>
    <g stroke="#a4d0ef"><circle cx="58" cy="23" r="6" /><circle cx="58" cy="42.500" r="6" /><circle cx="36" cy="53" r="6" /></g>
  </g>,
  <g key="11" strokeWidth="1.500" fill="none">
    <path d="M35.500 0v52" stroke="#d5d5d5" />
    <g stroke="#4f84ad"><circle cx="23" cy="16.500" r="4.500" /><circle cx="23" cy="43.500" r="4.500" /><circle cx="60" cy="17" r="4.500" /></g>
    <g stroke="#7fb0d4"><circle cx="11" cy="11.500" r="4.500" /><circle cx="11" cy="41" r="4.500" /><circle cx="48" cy="36" r="4.500" /><circle cx="60" cy="22.500" r="4.500" /></g>
    <g stroke="#a4d0ef"><circle cx="11" cy="18" r="4.500" /><circle cx="23" cy="31.500" r="4.500" /><circle cx="48" cy="12" r="4.500" /><circle cx="48" cy="41" r="4.500" /><circle cx="60" cy="38.500" r="4.500" /></g>
  </g>,
  <g key="12" fill="none" strokeWidth="1.500">
    <path d="M5 12l7-6 13 14 7-7 9 7 10-6" stroke="#fbdcc0" />
    <path d="M5 18l8 3 9-9 12 12 17-2" stroke="#fdebcf" />
    <path d="M4 25l8 7 16-8 13 9 10-3" stroke="#cbd9e6" />
  </g>,
  <g key="13" fill="none" strokeWidth="1.500">
    <path d="M28.500 0v41" stroke="#e8e8e8" />
    <path d="M4 18l8 1 6-7 7 0M31 18l8-8 7 4 6-5" stroke="#fbdcc0" />
    <path d="M4 23l8 0 6-6 7 0M31 24l9-3 5 2 7-3" stroke="#fdebcf" />
    <path d="M4 30l8 2 6-5 7 0M31 32l9-5 5 3 7-3" stroke="#cbd9e6" />
  </g>,
  <g key="14" fill="none" strokeWidth="1.500">
    <path d="M9 14l9-7 8 6 7-4 9 8 6-5" stroke="#fbdcc0" />
    <path d="M9 23l9-4 9 10 7-2 8 4 6-8" stroke="#cbd9e6" />
    <path d="M4 5v35M52 5v35" stroke="#ececec" strokeWidth="4" strokeDasharray="1 5" />
  </g>,
  <g key="15">
    <path d="M3 22L14 7l21 13 18-5v23H3z" fill="#cbd9e6" />
    <path d="M3 24l11-8 21 13 18-13v22H3z" fill="#fde3c8" />
    <path d="M3 30l11-4 21 7 18-6v11H3z" fill="#fff0e0" />
  </g>,
  <g key="16">
    <path d="M3 18L9 7l10 14 8-6v23H3zM29 19l6-12 10 14 8-6v23H29z" fill="#cbd9e6" />
    <path d="M3 25l6-9 10 12 8-11v21H3zM29 25l6-9 10 12 8-11v21H29z" fill="#fde3c8" />
    <path d="M3 31l6-4 10 5 8-4v10H3zM29 31l6-4 10 5 8-4v10H29z" fill="#fff0e0" />
  </g>,
  <g key="17">
    <path d="M10 21h4v17h-4zM18 17h5v21h-5zM26 25h5v13h-5zM34 7h5v31h-5zM42 21h5.500v17H42z" fill="#cbd9e6" />
    <path d="M11 17l9-7 9 11 9-8 8 8" fill="none" stroke="#fbdcc0" strokeWidth="1.500" />
    <path d="M4 5v35M52 5v35" stroke="#ececec" strokeWidth="4" strokeDasharray="1 5" />
  </g>,
  <g key="18" fill="none" strokeWidth="1.600">
    <g stroke="#f09a45"><circle cx="28" cy="15" r="4.700" /><circle cx="53" cy="19" r="4.700" /><circle cx="17.500" cy="27.500" r="4.700" /><circle cx="32" cy="32.500" r="4.700" /><circle cx="10.500" cy="43" r="4.700" /></g>
    <path d="M38 10h11M43.500 4.500v11M34 23h11M39.500 17.500v11M53 31h11M58.500 25.500v11M40 38.500h11M45.500 33v11M17 40.500h11M22.500 35v11" stroke="#55ad87" />
  </g>,
  <path key="19" d="M6 35h4v3H6zM11 30h4v8h-4zM16 22h4v16h-4zM21 11h4v27h-4zM26 7h4v31h-4zM31 11h4v27h-4zM36 22h4v16h-4zM41 30h4v8h-4zM46 35h4v3h-4z" fill="#cbe6d9" />,
  <g key="20">
    <path d="M8 22h9v6H8zM24 16h9v12h-9zM39 21h9v10h-9zM55 14h9v15h-9z" fill="#98dbb5" />
    <path d="M8 27h9v11H8zM24 27h9v6h-9zM39 31h9v9h-9zM55 28h9v6h-9z" fill="#55ad87" />
    <path d="M12.500 13v29M9.500 13h6M9.500 42h6M28.500 11v34M25.500 11h6M25.500 45h6M43.500 9v37M40.500 9h6M40.500 46h6M59.500 7v40M56.500 7h6M56.500 47h6" stroke="#333" strokeWidth="1.400" />
  </g>,
  <g key="21">
    <path d="M3 3h10v8H3zM10 16h4v8h-4zM15 16h4v8h-4zM31 29h7v8h-7zM3 29h2v8H3z" fill="#cbe6d9" />
    <path d="M3 16h6v8H3zM25 16h15v8H25zM20 29h4v8h-4z" fill="#e0f2e8" />
    <path d="M25 3h4v8h-4zM42 3h8v8h-8zM9 29h9v8H9zM46 29h4v8h-4z" fill="#fdebd8" />
    <path d="M20 3h4v8h-4zM36 3h2v8h-2zM45 16h8v8h-8zM19 29h2v8h-2z" fill="#fbdcc0" />
  </g>,
  <g key="22">
    <path d="M6 4h47v8H6zM6 17h47v8H6zM6 29h47v8H6z" fill="#f8f8f8" />
    <path d="M6 6h24v4H6zM6 19h40v4H6zM6 31h20v4H6z" fill="#cbe6d9" />
    <path d="M33.500 4v8" stroke="#e8e8e8" strokeWidth="2" />
    <path d="M41.500 17v8M47 29v8" stroke="#aaa" />
  </g>,
  <g key="23">
    <g fill="#e0f2e8"><circle cx="15.500" cy="26.500" r="9.800" /><circle cx="35.500" cy="11" r="2.800" /></g>
    <g fill="#cbe6d9"><circle cx="16.500" cy="13" r="3.500" /><circle cx="26" cy="10" r="5" /><circle cx="30" cy="32.500" r="4.200" /></g>
    <g fill="#fde8d5"><circle cx="45.500" cy="15.500" r="6.800" /><circle cx="31" cy="20.500" r="5.500" /></g>
    <circle cx="40.500" cy="26.500" r="3.600" fill="#fbdcc0" />
  </g>,
];

function ShowMe() {
  return (
    <div className="absolute top-[62px] right-[3px] flex flex-col items-end">
      <div className="z-10 -mb-[3px] flex h-[47px] w-[139px] items-center border-t border-l border-t-[#ddd] border-l-[#888] bg-[#fafafa] pb-[8px] pl-[13px] text-[16px] font-[380] tracking-[0.100px] text-black">
        <svg viewBox="0 0 21 19" className="mr-[6px] h-[19px] w-[21px]">
          <path d="M0 0h16v4H0z" fill="#8a6f9d" />
          <path d="M0 5h21v4H0z" fill="#7fa3cc" />
          <path d="M0 10h9v4H0z" fill="#f2a679" />
          <path d="M0 15h13v4H0z" fill="#f8707f" />
        </svg>
        Show Me
      </div>
      <div className="h-[695px] w-[255px] border-t-2 border-l-2 border-[#dcdcdc] bg-[#fafafa] pt-[17px] pl-[16px] shadow-[3px_2px_4px_rgba(0,0,0,0.35)]">
        <div className="grid w-[220px] grid-cols-3 gap-x-[5px] gap-y-[5.400px]">
          {thumbs.map((t, i) => (
            <div key={i} className={`h-[52px] w-[70px] bg-white ${i === 6 ? "border-2 border-[#e0693a]" : "border border-[#dedede]"}`}>
              <svg viewBox={i === 6 ? "2 2 66 48" : "1 1 68 50"} className="h-full w-full font-['Liberation_Sans',sans-serif]">{t}</svg>
            </div>
          ))}
        </div>
        <div className="mt-[23px] ml-[2px] text-[15px] leading-5 font-[380] tracking-[0.250px] text-black">
          For <b className="font-bold">horizontal bars</b> try
        </div>
        <div className="mt-[9px] ml-[2px] flex h-[25px] items-center text-[15px] font-[380] text-black">
          <span className="mt-[4px] w-[71px] tracking-[0.200px]">0 or more</span>
          <span className="h-[25px] w-[112px] rounded-full bg-[#4996b2] pr-[3px] text-center text-[14.500px] leading-[25px] font-medium tracking-[0.65px] text-white">Dimensions</span>
        </div>
        <div className="mt-[10px] ml-[2px] flex h-[25px] items-center text-[15px] font-[380] text-black">
          <span className="mt-[4px] w-[68px] tracking-[-0.05px]">1 or more</span>
          <span className="h-[25px] w-[99px] rounded-full bg-[#00b180] pr-[3px] text-center text-[14.500px] leading-[25px] font-medium tracking-[0.6px] text-white">Measures</span>
        </div>
      </div>
    </div>
  );
}

/* ---------- sheet tabs and status ---------- */

const Plus = () => <path d="M14 9.500v9M9.500 14h9" stroke="#555" strokeWidth="3" />;

function SheetTabs() {
  return (
    <div className="flex h-[37px] shrink-0 border-b border-[#cfcfcf] bg-[#e5e5e5] pt-px text-[16px] font-[380] text-[#5c5c5c]">
      <div className="flex w-[164px] items-center border-r border-[#c8c8c8] pl-[12px] tracking-[-0.150px]">
        <svg viewBox="0 0 12 15" className="mr-[7px] h-[15px] w-[11px]" fill="none" stroke="#777" strokeWidth="1.300">
          <path d="M1 3v9c0 3 10 3 10 0V3" />
          <ellipse cx="6" cy="3" rx="5" ry="2.200" />
        </svg>
        Data Source
      </div>
      <div className="w-[69px] border-r border-[#c8c8c8] pr-[3px] text-center leading-[36px] tracking-[-0.35px]">Sheet 1</div>
      <div className="w-[71px] border-r border-[#c8c8c8] pr-[3px] text-center leading-[36px] tracking-[-0.15px]">Sheet 2</div>
      <div className="w-[72px] border-r border-[#c8c8c8] bg-[#fafafa] pr-[2px] text-center leading-[34px] font-bold text-[#555]">Sheet 3</div>
      <div className="flex w-10 items-center justify-center border-r-2 border-[#c8c8c8] pl-[2px]">
        <svg viewBox="0 0 19 19" className="h-[19px] w-[19px]" fill="none" stroke="#777" strokeWidth="1.300">
          <path d="M9 14H1V1h13v8M4 11V9M7 11V4.500M10 8V6" /><Plus />
        </svg>
      </div>
      <div className="flex w-10 items-center justify-center border-r-2 border-[#c8c8c8]">
        <svg viewBox="0 0 19 19" className="h-[19px] w-[19px]" fill="none" stroke="#777" strokeWidth="1.300">
          <path d="M9 14H1V1h13v8M1 7h13M7.500 1v13" /><Plus />
        </svg>
      </div>
      <div className="flex w-10 items-center justify-center border-r-2 border-[#c8c8c8] pl-[2px]">
        <svg viewBox="0 0 19 19" className="h-[19px] w-[19px]" fill="none" stroke="#777" strokeWidth="1.300">
          <path d="M9 15l-2-1-6 1V1.500L7.500 3 14 1.500V9M7.500 3v11" /><Plus />
        </svg>
      </div>
    </div>
  );
}

function StatusBar() {
  return (
    <div className="flex h-[27px] shrink-0 items-center border-b border-[#bdbdbd] bg-[#eaeaea] text-[15px] font-[380] whitespace-nowrap text-black">
      <span className="w-[77px] pt-px pl-[3px] tracking-[-0.2px]">6 marks</span>
      <span className="w-[150px] pt-px tracking-[-0.450px]">3 rows by 2 columns</span>
      <span className="pt-px tracking-[-0.360px]">SUM of CNT(Pricein Germany): 180</span>
      <div className="ml-auto flex h-full items-center">
        <div className="h-full w-[158px] border-l-2 border-[#cfcfcf]" />
        <div className="h-full w-[34px] border-l border-[#cfcfcf]" />
        <div className="h-full w-[34px] border-l border-[#cfcfcf]" />
        <div className="h-full w-[58px] border-l border-[#cfcfcf]" />
        <div className="flex h-full w-[89px] items-center border-l-2 border-[#cfcfcf] pl-[8px]">
          <svg viewBox="0 0 70 12" className="h-3 w-[70px]" fill="#b5b5b5">
            <path d="M1 2h1.500v9H1zM8 2v9L3.500 6.500zM27 2v9l-5-4.500zM42 2v9l5-4.500zM60.500 2v9L65 6.500zM66 2h1.500v9H66z" />
          </svg>
        </div>
        <div className="flex h-full w-[83px] items-center border-l border-[#cfcfcf] pt-px pl-[11px]">
          <svg viewBox="0 0 67 14" className="h-[14px] w-[67px]" fill="#b5b5b5">
            <path d="M0 0h4v4H0zM5 0h4v4H5zM10 0h4v4h-4zM0 5h4v4H0zM5 5h4v4H5zM10 5h4v4h-4zM0 10h4v4H0zM5 10h4v4H5zM10 10h4v4h-4zM26 0h14v9H26zM26 10h4v4h-4zM31 10h4v4h-4zM36 10h4v4h-4z" />
            <path d="M52 0h14v14H52z" fill="#5f5f5f" />
          </svg>
        </div>
      </div>
    </div>
  );
}

/* ---------- windows taskbar ---------- */

function TaskApp({ children, running }: { children: React.ReactNode; running?: boolean }) {
  return (
    <div className="flex h-full w-[55.200px] flex-col items-center pt-[12px]">
      <svg viewBox="0 0 30 30" className="h-[30px] w-[30px] shrink-0">{children}</svg>
      {running && <div className="mt-[5px] h-1 w-[7px] rounded-full bg-[#8a8a8a]" />}
    </div>
  );
}

function Taskbar() {
  return (
    <div className="flex h-[55px] shrink-0 items-center bg-linear-[90deg,#d5e0f8_0px,#d8e1f7_90px,#e9edfa_185px,#f1f1f1_205px,#f1f1f1_1540px,#e6ebf7_1590px,#d5e1f8_1680px,#d3e0f8_1918px] pt-[2px] font-['Open_Sans',sans-serif]">
      <svg viewBox="0 0 28 28" className="ml-[15px] h-[27px] w-7">
        <defs>
          <linearGradient id="moon" x1="0" y1="0" x2="1" y2="1"><stop stopColor="#b4bec6" /><stop offset="1" stopColor="#6f7b85" /></linearGradient>
        </defs>
        <circle cx="13" cy="13.500" r="13" fill="url(#moon)" />
        <path d="M15 23a4 4 0 0 1 0-7.500 5 5 0 0 1 8.500-1 4 4 0 0 1 1 8.500z" fill="#e8ebee" />
      </svg>
      <svg viewBox="0 0 29 29" className="ml-[515px] h-[29px] w-[29px]">
        <defs>
          <linearGradient id="win" x1="0" y1="0" x2="1" y2="1"><stop stopColor="#4cc8f8" /><stop offset="1" stopColor="#0670cf" /></linearGradient>
        </defs>
        <path d="M0 1a1 1 0 0 1 1-1h12.800v13.800H0zM15.200 0H28a1 1 0 0 1 1 1v12.800H15.200zM0 15.200h13.800V29H1a1 1 0 0 1-1-1zM15.200 15.200H29V28a1 1 0 0 1-1 1H15.200z" fill="url(#win)" />
      </svg>
      <div className="ml-[16px] flex h-10 w-[274px] items-center rounded-full border border-b-[#ccc] border-[#e0e0e0] bg-[#fcfcfc] pl-[13px] text-[16px] tracking-[-0.2px] text-[#5c5c5c]">
        <svg viewBox="0 0 20 20" className="mr-[12px] h-5 w-5" fill="none" stroke="#222" strokeWidth="2">
          <circle cx="8.800" cy="8" r="6.500" />
          <path d="M13 13l5.500 6" strokeWidth="2.400" />
        </svg>
        Search
      </div>
      <div className="ml-[3px] flex h-full">
        <TaskApp><path d="M1 10h22v19H1z" fill="#2a2a2a" /><path d="M8 1h21v20H8z" fill="#fff" opacity=".8" /><path d="M8 10h15v11H8z" fill="#b4b4b4" /></TaskApp>
        <TaskApp>
          <defs>
            <linearGradient id="chat" x1="0" y1="0" x2="0.600" y2="1"><stop stopColor="#9a72c0" /><stop offset="1" stopColor="#4f52c0" /></linearGradient>
          </defs>
          <path d="M15 1a14 14 0 1 1-7 26L2 29l.5-7A14 14 0 0 1 15 1z" fill="url(#chat)" />
          <rect x="7" y="10" width="11" height="11" rx="2" fill="#fff" /><path d="M19 14l5-3.500v10L19 17z" fill="#fff" />
        </TaskApp>
        <TaskApp>
          <defs>
            <linearGradient id="edgeTop" x1="0" y1="0" x2="1" y2="0.600"><stop stopColor="#1b8de0" /><stop offset=".5" stopColor="#2fc3d5" /><stop offset="1" stopColor="#63db4e" /></linearGradient>
            <linearGradient id="edgeLow" x1="0" y1="0" x2="1" y2="1"><stop stopColor="#1785d8" /><stop offset="1" stopColor="#0f4b94" /></linearGradient>
          </defs>
          <path d="M0.500 13C2 5 8 0 15.500 0 24 0 30 6 30 12.500c0 5-4 8-8 8-3 0-4.500-1-4.500-2 0-1 1.500-1.500 1.500-4C19 11 15.500 8 11 8 5.500 8 1.500 10.500 0.500 13z" fill="url(#edgeTop)" />
          <path d="M0.500 13C2 10 6 8 10.500 8c4 0 6 2 7 4-4-1-6 2-6 5 0 6 7 9.500 16 5.500C24.500 27 20 30 15 30 6 30-1 22 0.500 13z" fill="url(#edgeLow)" />
        </TaskApp>
        <TaskApp running>
          <path d="M0 4a2 2 0 0 1 2-2h8l3 4h15a2 2 0 0 1 2 2v6H0z" fill="#e0a010" />
          <path d="M0 8h30v20a1 1 0 0 1-1 1H1a1 1 0 0 1-1-1z" fill="#fdcb45" />
          <path d="M5 29v-6a2 2 0 0 1 2-2h16a2 2 0 0 1 2 2v6z" fill="#1b78cf" /><path d="M9 25h12" stroke="#0c4a8a" strokeWidth="1.500" />
        </TaskApp>
        <TaskApp>
          <path d="M0 11L15 1l15 10v9H0z" fill="#0f5ea8" /><path d="M3 11h24v10H3z" fill="#f2f2f2" />
          <path d="M0 11l15 9.500V29H0z" fill="#27a5ea" /><path d="M30 11L15 20.500 0 29h30z" fill="#34b4f2" />
        </TaskApp>
        <TaskApp>
          <circle cx="15" cy="15" r="14" fill="#fff" stroke="#111" strokeWidth="1.800" />
          <text x="15" y="18.700" textAnchor="middle" fontSize="10.500" fontWeight="800" letterSpacing="-1" fill="#111">DELL</text>
        </TaskApp>
        <TaskApp>
          <path d="M0 4h13l2 7 2-7h13l-6 23h-6l-3-11-3 11H6z" fill="#f5421e" />
          <path d="M7 8l5 17M22 9l-5 17M16 8h8" stroke="#fff" strokeWidth="1.500" fill="none" />
        </TaskApp>
        <TaskApp running>
          <rect x="0.500" y="0.500" width="29" height="29" rx="2" fill="#2d6487" />
          <path d="M4 4c5 0 9 2 11 7 1 4 4 6 5 9l4 3-4 0c-1 1-1 3-1 3-1-3-4-5-6-6-1 2-1 3-1 5-2-2-2-4-2-6C7 14 8 8 4 4z" fill="none" stroke="#dfe9f0" strokeWidth="1.200" />
          <path d="M22 2l2 4 4 0-2 2" stroke="#fff" fill="none" />
        </TaskApp>
        <TaskApp running>
          <rect x="1" y="1" width="28" height="28" fill="#fbfbfb" stroke="#ddd" />
          <svg x="3" y="3" width="24" height="24" viewBox="0 0 20 20" stroke="#3f80a8" fill="none" strokeWidth="1.200">
            <path d="M10 7v6M7 10h6" strokeWidth="1.500" />
            <path d="M10 1v3.600M8.200 2.800h3.600M10 15.400V19M8.200 17.200h3.600M2.800 8.200v3.600M1 10h3.600M17.200 8.200v3.600M15.400 10H19" />
            <path d="M5 3.200v3.600M3.200 5h3.600M15 3.200v3.600M13.200 5h3.600M5 13.200v3.600M3.200 15h3.600M15 13.200v3.600M13.200 15h3.600" />
          </svg>
        </TaskApp>
      </div>
      <div className="ml-auto flex items-center text-[#1a1a1a]">
        <div className="flex h-[49px] w-[38px] items-center justify-center rounded-md border border-[#e3e9f5] bg-[#f4f7fd]">
          <svg viewBox="0 0 14 9" className="h-[9px] w-[14px]" fill="none" stroke="#111" strokeWidth="1.800"><path d="M1 1l6 6 6-6" /></svg>
        </div>
        <div className="ml-[13px] w-[53px] text-[14.500px] leading-5 tracking-[0.050px]">ENG<br />INTL</div>
        <svg viewBox="0 0 82 22" className="h-[22px] w-[82px]" fill="none" stroke="#222" strokeWidth="1.400">
          <path d="M10 20a9 9 0 1 1 9-10M10 2c-5 5-5 13 0 18M10 2c3 2 4 5 4.500 8M1.800 8h16.500M1.800 14H10" />
          <circle cx="15.500" cy="15.500" r="5" /><path d="M12 19l7-7" />
          <path d="M31 8.500h3.500L39 4.500v13l-4.500-4H31zM42.500 8c1.500 2 1.500 4 0 6M45.500 6c2.500 3 2.500 7 0 10M48.500 4c3.500 4 3.500 10 0 14" />
          <rect x="61.500" y="6" width="16.500" height="10.500" rx="2.500" /><rect x="64" y="8.300" width="5.500" height="6" fill="#222" stroke="none" /><path d="M80 9.500v3.500" strokeWidth="2.500" />
        </svg>
        <div className="w-[95px] text-right text-[14.500px] leading-5 tracking-[0.100px] whitespace-nowrap">17:27<br />26-03-2023</div>
        <div className="mr-[22px] ml-[9px] h-[22px] w-[22px] rounded-full bg-[#0067c0] text-center text-[12px] leading-[21px] text-white">16</div>
      </div>
    </div>
  );
}

function Tray() {
  const cell = "flex h-[48px] w-[48px] items-center justify-center";
  return (
    <div className="absolute top-[893px] left-[1473px] grid h-[112px] w-[261px] grid-cols-5 content-start gap-x-[2px] gap-y-[2px] rounded-[9px] border border-[#e2e2e2] bg-[#f7f7f7] px-[5px] pt-[5px] shadow-[0_6px_14px_rgba(0,0,0,0.22)]">
      <div className={`${cell} rounded-md border border-[#eaeaea] bg-[#fcfcfc]`}>
        <svg viewBox="0 0 20 20" className="h-5 w-5"><path d="M1 19C2 10 8 5 19 0c0 8-5 14-13 15z" fill="#b48bd0" /><path d="M1 19C5 12 10 8 19 0c-1 9-8 13-14 15z" fill="#7a3fa5" /></svg>
      </div>
      <div className={cell}>
        <svg viewBox="0 0 20 20" className="h-5 w-5"><circle cx="10" cy="10" r="9.500" fill="#fb9a25" /><path d="M10 4l5 6h-3v5H8v-5H5z" fill="#fff27a" /></svg>
      </div>
      <div className={cell}>
        <svg viewBox="0 0 20 20" className="h-5 w-5" fill="#b5b5b5" stroke="#222" strokeWidth="1.300"><path d="M5 16.500a4 4 0 0 1-.5-8A5.500 5.500 0 0 1 15 7.500a4.500 4.500 0 0 1 .5 9z" /><path d="M3 2.500l15 15.500" /></svg>
      </div>
      <div className={cell}>
        <svg viewBox="0 0 20 20" className="h-5 w-5"><path d="M2 5h12l-2 3.500H7.500L10.500 17z" fill="#ee7431" /><path d="M13.500 5H18l-6 12h-2.500z" fill="#1c2742" /></svg>
      </div>
      <div className={cell}>
        <svg viewBox="0 0 20 20" className="h-5 w-5" fill="none" stroke="#fff" strokeWidth="1.200"><path d="M0 0h20v20H0z" fill="#0c80dd" stroke="none" /><path d="M7 3h9v15H7M13 9H4l3.500-3M4 11.500h9L9.500 15" /></svg>
      </div>
      <div className={cell}>
        <svg viewBox="0 0 20 20" className="h-5 w-5" fill="none"><path d="M5 1h14v18H1V5z" fill="#f4dff5" stroke="#8b1a96" strokeWidth="1.500" /><path d="M6 15V5.500l7 9V5" stroke="#6e2a85" strokeWidth="2.800" /></svg>
      </div>
      <div className={cell}>
        <svg viewBox="0 0 20 20" className="h-5 w-5"><path d="M9.500 0l9 3v6c0 5-4 8-9 10-5-2-9-5-9-10V3z" fill="#0a74cf" /><path d="M9.500 0v9H.5V3z" fill="#44bdf0" /><path d="M14 7l6 13H8z" fill="#fcc419" /><path d="M14 11.500v4.500M14 17v1.500" stroke="#222" strokeWidth="1.400" /></svg>
      </div>
      <div className={cell}>
        <svg viewBox="0 0 20 20" className="h-5 w-5" fill="none" stroke="#fff" strokeWidth="1.200"><rect width="20" height="20" rx="2" fill="#e06a10" stroke="none" /><path d="M11.500 2.500c-4 3 2 4-1 7M8.500 5c-2 2 1 3 0 4.500M5 11.500h9c3 0 2 2.500-.5 2.500M6 14h7M4 16.800h11" /></svg>
      </div>
    </div>
  );
}

export default function App() {
  return (
    <div className="relative flex h-[1076px] w-[1918px] flex-col overflow-hidden bg-[#f4f4f4] font-[Roboto,sans-serif]">
      <TitleBar />
      <MenuBar />
      <Toolbar />
      <div className="flex h-[850px] shrink-0">
        <DataPane />
        <MarksColumn />
        <View />
        <DataGuide />
      </div>
      <SheetTabs />
      <StatusBar />
      <Taskbar />
      <ShowMe />
      <Tray />
    </div>
  );
}
